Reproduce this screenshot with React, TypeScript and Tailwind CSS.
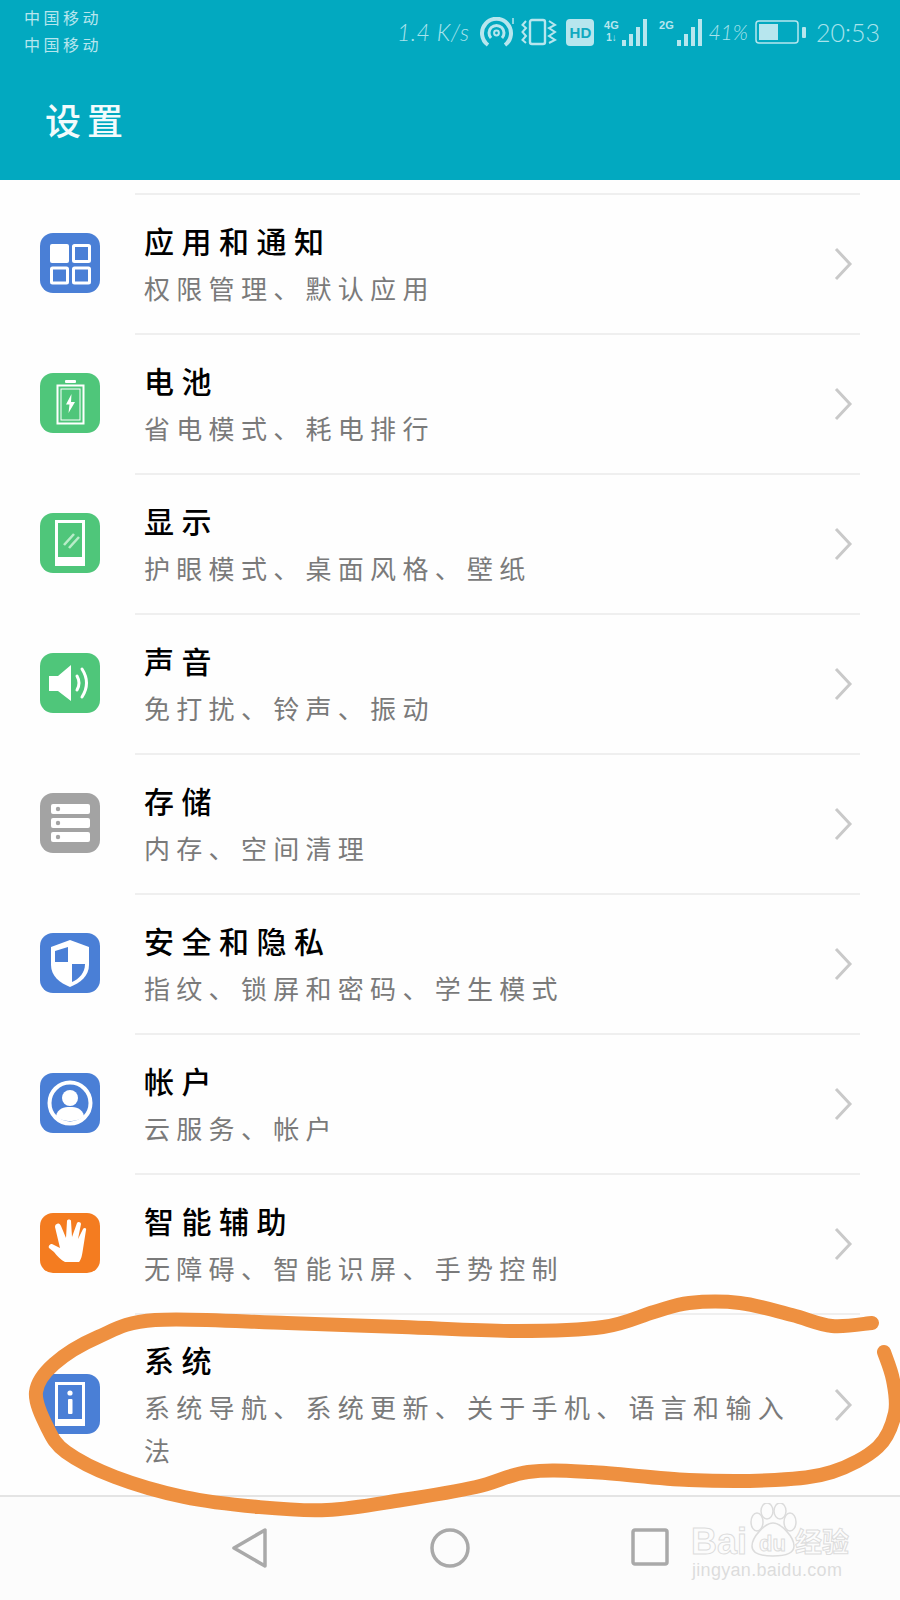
import React from "react";

const cjk = "font-['Noto_Sans_CJK_SC','Noto_Sans_CJK_JP',sans-serif]";

function Tile({ color, children }: { color: string; children: React.ReactNode }) {
  return (
    <svg width="60" height="60" viewBox="0 0 60 60" className="shrink-0 block">
      <rect width="60" height="60" rx="13" fill={color} />
      {children}
    </svg>
  );
}

const BLUE = "#4a7fd6";
const GREEN = "#4fc67a";

const AppsIcon = () => (
  <Tile color={BLUE}>
    <rect x="10" y="11" width="19" height="19" rx="2" fill="#fff" />
    <rect x="33.5" y="12.5" width="16" height="16" rx="1" fill="none" stroke="#fff" strokeWidth="3" />
    <rect x="11.5" y="35" width="16" height="15" rx="1" fill="none" stroke="#fff" strokeWidth="3" />
    <rect x="33.5" y="35" width="16" height="15" rx="1" fill="none" stroke="#fff" strokeWidth="3" />
  </Tile>
);
const BatteryIcon = () => (
  <Tile color={GREEN}>
    <rect x="25" y="7" width="11" height="3" rx="1" fill="#fff" />
    <rect x="17.5" y="12.5" width="26" height="38" fill="none" stroke="#fff" strokeWidth="2" />
    <rect x="21" y="16" width="19" height="31" fill="none" stroke="#fff" strokeWidth="1" />
    <path d="M31.5 21 L26 31.5 H29.5 L28.5 40 L35 29 H31 Z" fill="#fff" />
  </Tile>
);
const DisplayIcon = () => (
  <Tile color={GREEN}>
    <path fillRule="evenodd" d="M15 7 H45 V53 H15 Z M18 10 V44 H42 V10 Z" fill="#fff" />
    <path d="M24 32 L34 21 M29 35 L39 24" stroke="#b9ecc9" strokeWidth="2.6" />
  </Tile>
);
const SoundIcon = () => (
  <Tile color={GREEN}>
    <path d="M9 23 H18 L31 12 V48 L18 38 H9 Z" fill="#fff" />
    <path d="M37 23 Q41 30 37 37" fill="none" stroke="#fff" strokeWidth="3" strokeLinecap="round" />
    <path d="M42 16 Q51 30 42 44" fill="none" stroke="#fff" strokeWidth="3" strokeLinecap="round" />
  </Tile>
);
const StorageIcon = () => (
  <Tile color="#a3a3a3">
    {[11, 25, 39].map((y) => (
      <g key={y}>
        <rect x="11" y={y} width="39" height="10" rx="2" fill="#fff" />
        <circle cx="18" cy={y + 5} r="2.2" fill="#a3a3a3" />
      </g>
    ))}
  </Tile>
);
const ShieldIcon = () => (
  <Tile color={BLUE}>
    <path d="M30 7 L49 14 V32 C49 43 40 50 30 54 C20 50 11 43 11 32 V14 Z" fill="#fff" />
    <path d="M28 14 V29 H15 V18 Z" fill={BLUE} />
    <path d="M32 31 H45 C45 40 39 46 32 49 Z" fill={BLUE} />
  </Tile>
);
const AccountIcon = () => (
  <Tile color={BLUE}>
    <circle cx="30" cy="30" r="20.5" fill="none" stroke="#fff" strokeWidth="4" />
    <circle cx="30" cy="25" r="8" fill="#fff" />
    <path d="M16 43 C18 35 24 34 30 34 C36 34 42 35 44 43 C40 47 35 48 30 48 C25 48 20 47 16 43 Z" fill="#fff" />
  </Tile>
);
const HandIcon = () => (
  <Tile color="#f47c20">
    <path
      d="M17 11 C19 10 20 11 21 13 L26 25 L27 8 C27 6 31 6 31 8 L32 24 L37 10 C38 8 41 9 41 11 L38 26 L43 16 C44 14 47 15 46 17 L43 36 C42 43 41 47 39 49 H25 C21 47 17 43 14 39 L9 35 C8 33 10 31 12 31 L20 35 L15 14 C15 12 16 11 17 11 Z"
      fill="#fff"
    />
  </Tile>
);
const InfoIcon = () => (
  <Tile color={BLUE}>
    <path fillRule="evenodd" d="M15 8 H45 V52 H15 Z M18 11 V45 H42 V11 Z" fill="#fff" />
    <circle cx="30" cy="19" r="2.6" fill="#fff" />
    <rect x="28" y="25" width="4.5" height="15" rx="1" fill="#fff" />
  </Tile>
);

const Chevron = () => (
  <svg width="20" height="34" viewBox="0 0 20 34" className="shrink-0">
    <path d="M3 2 L17 17 L3 32" fill="none" stroke="#c9c9c9" strokeWidth="3" />
  </svg>
);

const rows: { title: string; sub: string; icon: React.ReactNode; tall?: boolean }[] = [
  { title: "应用和通知", sub: "权限管理、默认应用", icon: <AppsIcon /> },
  { title: "电池", sub: "省电模式、耗电排行", icon: <BatteryIcon /> },
  { title: "显示", sub: "护眼模式、桌面风格、壁纸", icon: <DisplayIcon /> },
  { title: "声音", sub: "免打扰、铃声、振动", icon: <SoundIcon /> },
  { title: "存储", sub: "内存、空间清理", icon: <StorageIcon /> },
  { title: "安全和隐私", sub: "指纹、锁屏和密码、学生模式", icon: <ShieldIcon /> },
  { title: "帐户", sub: "云服务、帐户", icon: <AccountIcon /> },
  { title: "智能辅助", sub: "无障碍、智能识屏、手势控制", icon: <HandIcon /> },
  { title: "系统", sub: "系统导航、系统更新、关于手机、语言和输入法", icon: <InfoIcon />, tall: true },
];

function Row({ title, sub, icon, tall }: (typeof rows)[number]) {
  return (
    <div className={`flex items-center pl-10 ${tall ? "h-[182px]" : "h-[140px]"}`}>
      {icon}
      <div className="flex h-full flex-1 items-center border-t-2 border-[#efefef] ml-[35px] mr-10 pl-[9px] pr-[7px]">
        <div className="flex-1 pb-[6px]">
          <div className={`${cjk} text-[30px] leading-[52px] tracking-[7.5px] font-medium text-black`}>{title}</div>
          <div className={`${cjk} w-[660px] text-[26px] leading-[43px] tracking-[6.3px] text-[#7a7a7a]`}>{sub}</div>
        </div>
        <Chevron />
      </div>
    </div>
  );
}

function Signal({ label, sub }: { label: string; sub?: boolean }) {
  return (
    <div className="flex items-end h-[29px] gap-[2px]">
      <div className="flex flex-col items-center w-[18px] h-full">
        <span className="font-['Liberation_Sans',sans-serif] text-[11px] leading-[14px] font-bold text-[#b7e6ee]">{label}</span>
        {sub && <span className="font-['Liberation_Sans',sans-serif] text-[10px] leading-[12px] font-bold text-[#b7e6ee]">1↓</span>}
      </div>
      <svg width="26" height="29" viewBox="0 0 26 29">
        <rect x="0" y="22" width="4" height="6" fill="#b7e6ee" />
        <rect x="7" y="16" width="4" height="12" fill="#b7e6ee" />
        <rect x="14" y="9" width="4" height="19" fill="#b7e6ee" />
        <rect x="21" y="1" width="4" height="27" fill="#b7e6ee" />
      </svg>
    </div>
  );
}

function StatusIcons() {
  return (
    <div className="flex items-center mt-[17px] mr-[20px] text-[#a9e3ec]">
      <span className="font-['Lato',sans-serif] italic font-light text-[23px] leading-[30px] tracking-[0.5px] mr-[10px]">1.4 K/s</span>
      <svg width="36" height="30" viewBox="0 0 36 30" className="mr-[6px]" fill="none" stroke="#b7e6ee">
        <path d="M9 28 A14.5 14.5 0 1 1 26 28" strokeWidth="4" />
        <path d="M12 21 A7.5 7.5 0 1 1 23 21" strokeWidth="3" />
        <circle cx="17.5" cy="16" r="2.4" strokeWidth="2" />
        <path d="M34 1 V7" strokeWidth="1.5" />
      </svg>
      <svg width="36" height="28" viewBox="0 0 36 28" className="mr-[9px]" fill="none" stroke="#b7e6ee">
        <rect x="9" y="2" width="15" height="24" rx="2" strokeWidth="2.4" />
        <path d="M5 3 L1.5 7 L5 10 L1.5 14 L5 18 L1.5 22 L5 25" strokeWidth="2" />
        <path d="M28 3 L34 7 L28 10 L34 14 L28 18 L34 22 L28 25" strokeWidth="2" />
      </svg>
      <span className="flex items-center justify-center w-[28px] h-[27px] rounded-[4px] bg-[#b7e6ee] text-[#12a9bf] font-['Liberation_Sans',sans-serif] text-[15px] font-bold leading-none mr-[8px]">HD</span>
      <div className="mr-[9px]"><Signal label="4G" sub /></div>
      <div className="mr-[5px]"><Signal label="2G" /></div>
      <span className="font-['Lato',sans-serif] italic font-light text-[21px] leading-[30px] mr-[7px]">41%</span>
      <svg width="52" height="26" viewBox="0 0 52 26" className="mr-[9px]" fill="none">
        <rect x="1" y="2" width="42" height="22" rx="3" stroke="#b7e6ee" strokeWidth="1.5" />
        <rect x="4" y="5" width="19" height="16" fill="#b7e6ee" />
        <rect x="47" y="8" width="4" height="11" rx="1" fill="#b7e6ee" />
      </svg>
      <span className="font-['Lato',sans-serif] font-light text-[25px] leading-[30px]">20:53</span>
    </div>
  );
}

const strokePts: [number, number][] = [
  [872, 1323], [832, 1326], [792, 1315], [740, 1303], [689, 1303], [654, 1312], [603, 1327], [517, 1331],
  [402, 1327], [287, 1323], [155, 1320], [98, 1337], [54, 1364], [36, 1392], [47, 1427], [66, 1452],
  [115, 1477], [184, 1497], [258, 1507], [327, 1510], [402, 1500], [476, 1487], [528, 1472], [591, 1472],
  [689, 1480], [775, 1480], [832, 1472], [878, 1447], [895, 1413], [893, 1380], [884, 1352],
];

function smooth(p: [number, number][]) {
  let d = `M${p[0][0]} ${p[0][1]}`;
  for (let i = 0; i < p.length - 1; i++) {
    const a = p[Math.max(0, i - 1)], b = p[i], c = p[i + 1], e = p[Math.min(p.length - 1, i + 2)];
    d += ` C${b[0] + (c[0] - a[0]) / 6} ${b[1] + (c[1] - a[1]) / 6} ${c[0] - (e[0] - b[0]) / 6} ${c[1] - (e[1] - b[1]) / 6} ${c[0]} ${c[1]}`;
  }
  return d;
}

export default function App() {
  return (
    <div className="relative flex h-[1600px] w-[900px] flex-col overflow-hidden bg-[#fefefe]">
      <header className="h-[180px] shrink-0 bg-[#02a9c0]">
        <div className="flex items-start justify-between">
          <div className={`${cjk} pl-[24px] pt-[4px] text-[16px] leading-[27px] tracking-[3.5px] text-[#b7e6ee]`}>
            <div>中国移动</div>
            <div>中国移动</div>
          </div>
          <StatusIcons />
        </div>
        <div className={`${cjk} pl-[45px] mt-[36px] text-[36px] leading-[50px] tracking-[6px] font-medium text-[#f2fbfc]`}>设置</div>
      </header>
      <main className="pt-[13px]">
        {rows.map((r) => (
          <Row key={r.title} {...r} />
        ))}
      </main>
      <nav className="flex flex-1 items-start border-t-2 border-[#e4e4e4] bg-[#fcfcfc] pt-[31px] pl-[232px] gap-[164px]">
        <svg width="36" height="40" viewBox="0 0 36 40" fill="none" stroke="#a9a9a9" strokeWidth="3.5" strokeLinejoin="round">
          <path d="M33 2 V38 L2 20 Z" />
        </svg>
        <svg width="40" height="40" viewBox="0 0 40 40" fill="none" stroke="#a9a9a9" strokeWidth="3.5" className="-ml-[2px]">
          <circle cx="20" cy="20" r="18" />
        </svg>
        <svg width="38" height="38" viewBox="0 0 38 38" fill="none" stroke="#a9a9a9" strokeWidth="3.5" strokeLinejoin="round" className="-ml-[3px]">
          <rect x="2" y="2" width="34" height="34" rx="2" />
        </svg>
      </nav>

      <svg width="900" height="1600" viewBox="0 0 900 1600" className="absolute left-0 top-0 pointer-events-none">
        <path d={smooth(strokePts)} fill="none" stroke="#ee9040" strokeWidth="14" strokeLinecap="round" strokeLinejoin="round" />
      </svg>

      <div className="absolute left-[690px] top-[1503px] w-[165px]">
        <svg width="50" height="54" viewBox="0 0 50 54" className="absolute left-[58px] top-0" fill="none" stroke="#dcdcdc" strokeWidth="1.5">
          <ellipse cx="9" cy="19" rx="6" ry="9" />
          <ellipse cx="19" cy="8" rx="6" ry="8" />
          <ellipse cx="32" cy="8" rx="6" ry="8" />
          <ellipse cx="42" cy="19" rx="6" ry="9" />
          <path d="M25 20 C33 20 46 34 46 43 C46 51 36 53 25 53 C14 53 4 51 4 43 C4 34 17 20 25 20 Z" />
        </svg>
        <span className="absolute left-[1px] top-[21px] font-['Liberation_Sans',sans-serif] text-[36px] leading-[36px] font-bold text-transparent [-webkit-text-stroke:1px_#dcdcdc]">Bai</span>
        <span className="absolute left-[69px] top-[30px] font-['Liberation_Sans',sans-serif] text-[22px] leading-[22px] font-bold text-transparent [-webkit-text-stroke:1px_#dcdcdc]">du</span>
        <span className={`absolute left-[105px] top-[22px] ${cjk} text-[27px] leading-[32px] font-bold text-transparent [-webkit-text-stroke:1px_#dcdcdc]`}>经验</span>
        <span className="absolute left-[2px] top-[56px] font-['Liberation_Sans',sans-serif] text-[18px] leading-[22px] tracking-[0.3px] text-[#dcdcdc] whitespace-nowrap">jingyan.baidu.com</span>
      </div>
    </div>
  );
}
